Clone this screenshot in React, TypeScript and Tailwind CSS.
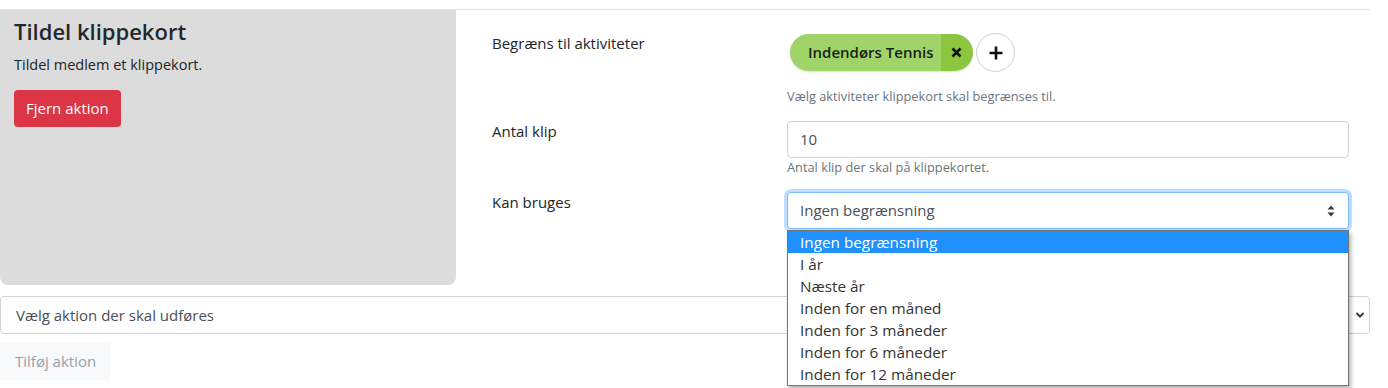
import React from "react";

const options = [
  "Ingen begrænsning",
  "I år",
  "Næste år",
  "Inden for en måned",
  "Inden for 3 måneder",
  "Inden for 6 måneder",
  "Inden for 12 måneder",
];

const SortIcon = () => (
  <svg width="8" height="12" viewBox="0 0 8 12" className="text-[#343a40]">
    <path d="M4 0.5 L7.5 4.5 L0.5 4.5 Z" fill="currentColor" />
    <path d="M4 11.5 L7.5 7.5 L0.5 7.5 Z" fill="currentColor" />
  </svg>
);

const ChevronIcon = () => (
  <svg width="10" height="8" viewBox="0 0 10 8" className="text-[#343a40]">
    <path d="M1.5 2 L5 5.5 L8.5 2" fill="none" stroke="currentColor" strokeWidth="2" />
  </svg>
);

const FormRow = ({
  label,
  children,
}: {
  label: string;
  children: React.ReactNode;
}) => (
  <div className="flex">
    <div className="w-[331px] pl-[36px] leading-6 -mt-[2px] text-[15px] text-[#212529]">
      {label}
    </div>
    <div className="w-[562px]">{children}</div>
  </div>
);

const Helper = ({ children }: { children: React.ReactNode }) => (
  <p className="text-[12.8px] leading-[18px] text-[#6c757d]">{children}</p>
);

export default function App() {
  return (
    <div className="bg-white min-h-[388px] text-[#212529] font-['Open_Sans',sans-serif] text-[15px]">
      <div className="h-[9px]" />
      <div className="w-[1370px] border-t border-[#dee2e6] flex">
        <div className="w-[456px] h-[275px] bg-[#dcdcdc] rounded-b-lg px-[14px] pt-[6px]">
          <h3 className="text-[22px] font-semibold leading-[30px] text-[#24282c]">
            Tildel klippekort
          </h3>
          <p className="mt-[9px] text-[14.5px] leading-5 text-[#212529]">
            Tildel medlem et klippekort.
          </p>
          <button className="mt-[15px] h-[37px] px-[12px] rounded bg-[#dc3545] text-white text-[15px]">
            Fjern aktion
          </button>
        </div>

        <div className="flex-1 pt-[23px] relative">
          <FormRow label="Begræns til aktiviteter">
            <div className="flex items-center gap-[3px] pl-[3px]">
              <div className="flex h-[37px] rounded-full overflow-hidden shadow-[0_1px_2px_rgba(0,0,0,0.15)]">
                <span className="flex items-center pl-[18px] pr-[8px] bg-[#a0d468] font-semibold text-[15px] text-[#1b1e21]">
                  Indendørs Tennis
                </span>
                <span className="flex items-center justify-center w-[32px] bg-[#8cc63f] pr-[2px]">
                  <svg width="11" height="11" viewBox="0 0 11 11">
                    <path d="M1.5 1.5 L9.5 9.5 M9.5 1.5 L1.5 9.5" stroke="#111" strokeWidth="2.6" />
                  </svg>
                </span>
              </div>
              <span className="flex items-center justify-center w-[39px] h-[39px] rounded-full border border-[#cfcfcf] bg-white">
                <svg width="14" height="14" viewBox="0 0 14 14">
                  <path d="M7 0.5 V13.5 M0.5 7 H13.5" stroke="#111" strokeWidth="2.6" />
                </svg>
              </span>
            </div>
            <div className="mt-[15px]">
              <Helper>Vælg aktiviteter klippekort skal begrænses til.</Helper>
            </div>
          </FormRow>

          <div className="mt-[16px]">
            <FormRow label="Antal klip">
              <div className="h-[37px] border border-[#ced4da] rounded flex items-center px-[12px] text-[15px] text-[#495057]">
                10
              </div>
              <Helper>Antal klip der skal på klippekortet.</Helper>
            </FormRow>
          </div>

          <div className="mt-[16px]">
            <FormRow label="Kan bruges">
              <div className="relative">
                <div className="h-[37px] border border-[#80bdff] rounded shadow-[0_0_0_3px_rgba(0,123,255,0.25)] flex items-center justify-between pl-[12px] pr-[13px] text-[15px] text-[#495057] bg-white">
                  <span>Ingen begrænsning</span>
                  <SortIcon />
                </div>
                <ul className="absolute left-0 top-[38px] w-[562px] z-10 bg-white border border-[#767676] shadow-[2px_3px_4px_rgba(0,0,0,0.3)] py-0">
                  {options.map((o, i) => (
                    <li
                      key={o}
                      className={
                        i === 0
                          ? "h-[22px] leading-[22px] pl-[12px] bg-[#1e90ff] text-white text-[15.3px]"
                          : "h-[22px] leading-[22px] pl-[12px] text-[#333] text-[15.3px]"
                      }
                    >
                      {o}
                    </li>
                  ))}
                </ul>
              </div>
            </FormRow>
          </div>
        </div>
      </div>

      <div className="mt-[11px] w-[1370px] h-[38px] border border-[#ced4da] rounded flex items-center justify-between pl-[15px] pr-[4px] text-[15px] text-[#495057]">
        <span>Vælg aktion der skal udføres</span>
        <ChevronIcon />
      </div>

      <button className="mt-[9px] h-[37px] px-[15px] rounded bg-[#f8f9fa] text-[#9a9fa4] text-[15px]">
        Tilføj aktion
      </button>
    </div>
  );
}
